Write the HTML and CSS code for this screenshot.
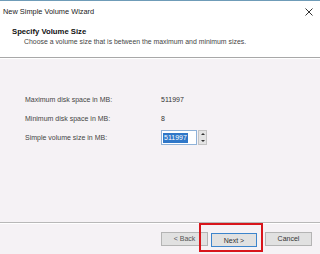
FILE: index.html
```html
<!DOCTYPE html>
<html lang="en">
<head>
    <meta charset="UTF-8">
    <title>New Simple Volume Wizard</title>
    <link rel="stylesheet" href="styles.css">
</head>
<body>
    <div id="wizard">
        <div id="title-bar">
            <span id="title">New Simple Volume Wizard</span>
            <span id="close">
                <svg width="8" height="8" viewBox="0 0 8 8"><path d="M0.5 0.5L7.5 7.5M7.5 0.5L0.5 7.5" stroke="#333" stroke-width="1"/></svg>
            </span>
        </div>
        <div id="header">
            <div id="head-title">Specify Volume Size</div>
            <div id="head-sub">Choose a volume size that is between the maximum and minimum sizes.</div>
        </div>
        <div id="content">
            <div class="row">
                <span class="label">Maximum disk space in MB:</span>
                <span class="value">511997</span>
            </div>
            <div class="row">
                <span class="label">Minimum disk space in MB:</span>
                <span class="value">8</span>
            </div>
            <div class="row">
                <span class="label">Simple volume size in MB:</span>
                <div class="spin">
                    <div class="spin-box"><span class="sel">511997</span></div>
                    <div class="spin-btns">
                        <span class="arrow up"></span>
                        <span class="arrow down"></span>
                    </div>
                </div>
            </div>
        </div>
        <div id="footer">
            <button class="btn back">&lt; Back</button>
            <div class="mark">
                <button class="btn next">Next &gt;</button>
            </div>
            <button class="btn cancel">Cancel</button>
        </div>
    </div>
</body>
</html>
```

FILE: styles.css
```css
*{
    margin: 0;
    padding: 0;
    box-sizing: border-box;
}
body{
    background: #f5f2f5;
    font-family: "Liberation Sans", Arial, sans-serif;
    color: #333;
}
#wizard{
    width: 320px;
    height: 254px;
    display: flex;
    flex-direction: column;
    border-top: 1px solid #6f9cb8;
}
#title-bar{
    height: 20px;
    background: #fff;
    display: flex;
    align-items: center;
    justify-content: space-between;
    padding: 1px 7px 0 3px;
    font-size: 7.4px;
    color: #222;
}
#close{
    display: flex;
}
#header{
    height: 37px;
    background: #fff;
    padding: 6px 0 0 12px;
    border-bottom: 1px solid #a8a8a8;
    box-shadow: 0 1px 0 #fff;
}
#head-title{
    font-size: 7.7px;
    font-weight: bold;
    color: #111;
    height: 10px;
    line-height: 10px;
}
#head-sub{
    font-size: 6.9px;
    color: #444;
    padding-left: 12px;
    line-height: 10px;
}
#content{
    flex: 1;
    padding: 32px 0 0 25px;
    border-bottom: 1px solid #b8b8b8;
    box-shadow: 0 1px 0 #fff;
}
.row{
    display: flex;
    align-items: center;
    height: 19px;
    font-size: 7px;
    color: #444;
}
.label{
    width: 136px;
}
.value{
    color: #333;
}
.spin{
    display: flex;
    align-items: stretch;
    height: 15px;
}
.spin-box{
    width: 36px;
    background: #fff;
    border: 1px solid #8fb2d8;
    padding: 1px;
    display: flex;
    align-items: center;
}
.sel{
    background: #2f77c8;
    color: #fff;
    padding: 0 1px;
    line-height: 10px;
}
.spin-btns{
    width: 9px;
    margin-left: 1px;
    background: #e4e4e4;
    border: 1px solid #c4c4c4;
    display: flex;
    flex-direction: column;
    align-items: center;
    justify-content: space-around;
}
.arrow{
    width: 0;
    height: 0;
    border-left: 2px solid transparent;
    border-right: 2px solid transparent;
}
.up{
    border-bottom: 2px solid #333;
}
.down{
    border-top: 2px solid #333;
}
#footer{
    height: 31px;
    display: flex;
    align-items: center;
    padding: 0 0 0 161px;
}
.btn{
    width: 47px;
    height: 14px;
    font-family: "Liberation Sans", Arial, sans-serif;
    font-size: 7px;
    color: #333;
    background: #e1e1e1;
    border: 1px solid #b4b4b4;
}
.back{
    color: #555;
}
.mark{
    display: flex;
    align-items: flex-start;
    align-self: flex-start;
    margin-left: -9px;
    padding: 8px 4px 3px 10px;
    border: 2px solid #d8151b;
    height: 29px;
    width: 64px;
}
.next{
    width: 46px;
    border-color: #3c84cc;
}
.cancel{
    margin-left: 2px;
}
```
